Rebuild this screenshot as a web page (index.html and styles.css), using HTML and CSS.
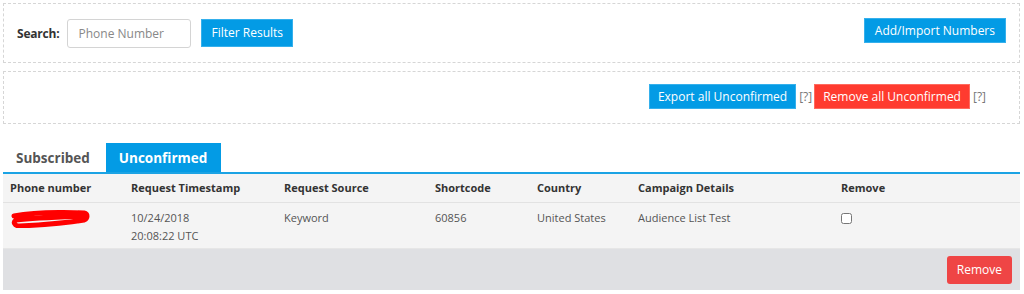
FILE: index.html
```html
<!DOCTYPE html>
<html lang="en">
<head>
  <meta charset="UTF-8">
  <title>Audience List</title>
  <link rel="stylesheet" href="styles.css">
</head>
<body>

<div class="page">
  <div class="panel search-panel">
    <div class="search-left">
      <label class="search-label" for="phone">Search:</label>
      <input type="text" id="phone" class="search-input" placeholder="Phone Number" />
      <button class="btn btn-blue btn-filter">Filter Results</button>
    </div>
    <button class="btn btn-blue btn-add">Add/Import Numbers</button>
  </div>

  <div class="panel action-panel">
    <button class="btn btn-blue">Export all Unconfirmed</button>
    <span class="help">[?]</span>
    <button class="btn btn-red">Remove all Unconfirmed</button>
    <span class="help">[?]</span>
  </div>

  <div class="tabs">
    <span class="tab">Subscribed</span>
    <span class="tab active">Unconfirmed</span>
  </div>

  <table class="list">
    <thead>
      <tr>
        <th class="c-phone">Phone number</th>
        <th class="c-time">Request Timestamp</th>
        <th class="c-source">Request Source</th>
        <th class="c-code">Shortcode</th>
        <th class="c-country">Country</th>
        <th class="c-campaign">Campaign Details</th>
        <th>Remove</th>
      </tr>
    </thead>
    <tbody>
      <tr>
        <td>
          <svg class="redact" width="80" height="18" viewBox="0 0 80 18">
            <path d="M4 6 C20 3, 50 2, 74 3 C78 4, 78 8, 74 10 C55 13, 30 15, 10 16 C4 16, 3 12, 6 10 C25 8, 50 7, 72 6"
                  fill="none" stroke="#ff0000" stroke-width="5" stroke-linecap="round" stroke-linejoin="round"/>
          </svg>
        </td>
        <td>10/24/2018<br>20:08:22 UTC</td>
        <td>Keyword</td>
        <td>60856</td>
        <td>United States</td>
        <td>Audience List Test</td>
        <td><input type="checkbox" class="check" /></td>
      </tr>
    </tbody>
    <tfoot>
      <tr>
        <td colspan="7" class="foot"><button class="btn btn-remove">Remove</button></td>
      </tr>
    </tfoot>
  </table>
</div>

</body>
</html>
```

FILE: styles.css
```css
body { margin: 0; font-family: "Open Sans", Arial, sans-serif; font-size: 12px; color: #333; background: #fff; }
.page { padding: 3px 4px 0 3px; }
.panel { border: 1px dashed #d6d6d6; display: flex; align-items: center; }
.search-panel { height: 58px; justify-content: space-between; padding: 0 13px 0 13px; }
.search-left { display: flex; align-items: center; }
.search-label { font-weight: bold; font-size: 12px; color: #333; margin-right: 8px; letter-spacing: -0.2px; }
.search-input { width: 124px; height: 29px; box-sizing: border-box; border: 1px solid #d4d4d4; border-radius: 3px; padding: 0 10px; font-family: inherit; font-size: 12px; color: #555; margin-right: 10px; }
.search-input::placeholder { color: #888; }
.btn { border: none; font-family: inherit; font-size: 12px; color: #fff; padding: 0 10px; height: 25px; cursor: pointer; }
.btn-blue { background: #039be5; border: 1px solid #35b0ec; }
.btn-red { background: #ff3b2f; border: 1px solid #ff6a5e; }
.btn-filter { height: 28px; margin-top: -1px; padding: 0 9px; }
.btn-add { margin-top: -5px; }
.action-panel { height: 51px; margin-top: 8px; justify-content: flex-end; padding-right: 31px; }
.action-panel .btn { margin-top: -3px; padding: 0 8px; }
.help { color: #777; margin: -3px 2px 0 3px; }
.tabs { display: flex; align-items: flex-end; margin-top: 19px; padding-left: 2px; }
.tab { font-size: 13.5px; font-weight: bold; color: #555; padding: 3px 11px 4px 11px; margin-right: 5px; line-height: 20px; }
.tab.active { background: #039be5; color: #fff; padding-top: 5px; padding-left: 13px; padding-right: 14px; }
.list { width: 1017px; border-collapse: collapse; border-top: 2px solid #1ba3e4; font-size: 11px; }
.list th { text-align: left; font-weight: bold; color: #333; background: #f4f4f4; padding: 6px 7px 6px 7px; border-bottom: 1px solid #e2e2e2; line-height: 16px; }
.list td { background: #f4f4f4; color: #555; padding: 6px 7px 3px 7px; vertical-align: top; line-height: 18px; }
.c-phone { width: 107px; }
.c-time { width: 139px; }
.c-source { width: 137px; }
.c-code { width: 88px; }
.c-country { width: 87px; }
.c-campaign { width: 189px; }
.redact { display: block; margin: 1px 0 0 0; }
.check { width: 11px; height: 11px; margin: 4px 0 0 0; }
.list td.foot { background: #dfe0e3; text-align: right; padding: 7px 8px 6px 7px; border-top: 1px solid #e6e6e6; line-height: 0; }
.btn-remove { background: #ef4545; border-radius: 3px; height: 28px; padding: 0 10px; font-size: 12px; line-height: 28px; }
```
